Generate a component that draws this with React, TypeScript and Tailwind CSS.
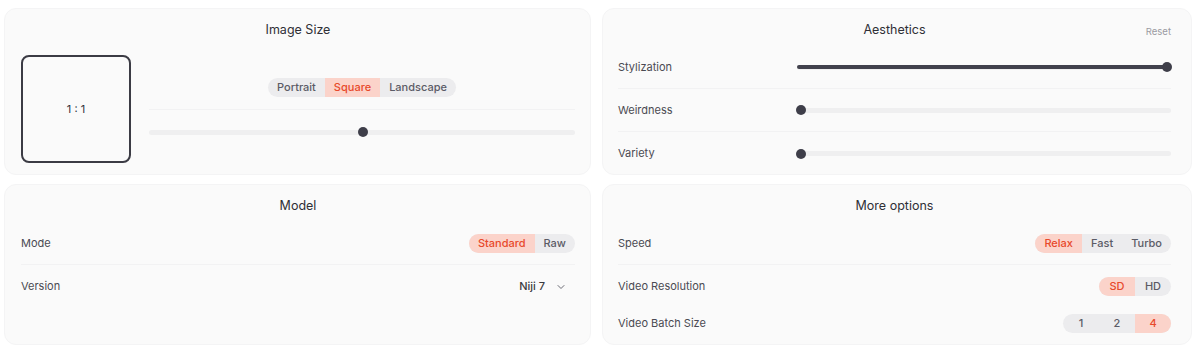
import * as React from 'react';
import { ChevronDown } from 'lucide-react';

type SegmentProps = {
  options: string[];
  active: string;
  fixed?: boolean;
};

function Segmented({ options, active, fixed }: SegmentProps) {
  return (
    <div className="flex h-[19px] overflow-hidden rounded-full bg-[#ececee]">
      {options.map((opt) => (
        <div
          key={opt}
          className={
            'flex items-center justify-center text-[11px] font-medium leading-none ' +
            (fixed ? 'w-9 ' : 'px-[9px] ') +
            (opt === active ? 'bg-[#fbd3ca] text-[#e8492b]' : 'text-[#5b5b66]')
          }
        >
          {opt}
        </div>
      ))}
    </div>
  );
}

function Slider({ value, thick }: { value: number; thick?: boolean }) {
  const pos = `calc(4px + (100% - 8px) * ${value / 100})`;
  return (
    <div className="relative flex h-[10px] flex-1 items-center">
      <div className="h-[5px] w-full rounded-full bg-[#efeff0]" />
      {thick ? <div className="absolute left-0 h-[4px] rounded-full bg-[#41414c]" style={{ width: pos }} /> : null}
      <div className="absolute size-[10px] -translate-x-1/2 rounded-full bg-[#3e3e49]" style={{ left: pos }} />
    </div>
  );
}

function Card({ title, children, className }: { title: string; children: React.ReactNode; className?: string }) {
  return (
    <div className={'flex flex-col rounded-xl border border-[#f4f4f5] bg-[#fafafa] pt-[13px] ' + (className ?? '')}>
      <div className="text-center text-[12.5px] leading-4 text-[#2f2f36]">{title}</div>
      {children}
    </div>
  );
}

function Row({
  label,
  children,
  divider,
  h = 'h-[43px]'
}: {
  label: string;
  children: React.ReactNode;
  divider?: boolean;
  h?: string;
}) {
  return (
    <div className={'flex items-center ' + h + (divider ? ' border-b border-[#f2f2f3]' : '')}>
      <span className="text-[11px] text-[#4a4a52]">{label}</span>
      <div className="flex flex-1 items-center justify-end">{children}</div>
    </div>
  );
}

export default function App() {
  return (
    <div
      className="grid h-[354px] w-[1200px] grid-cols-[587px_590px] grid-rows-[167px_161px] gap-x-[11px] gap-y-[9px] bg-white pl-1 pt-2"
      style={{ fontFamily: 'Inter, "Open Sans", sans-serif' }}
    >
      {/* Image size */}
      <Card title="Image Size" className="pl-4 pr-[15px]">
        <div className="mt-[17px] flex gap-[18px]">
          <div className="flex h-[108px] w-[110px] items-center justify-center rounded-lg border-2 border-[#3b3b44] text-[11px] text-[#33333a]">
            1 : 1
          </div>
          <div className="flex flex-1 flex-col pt-[23px]">
            <div className="flex justify-center">
              <Segmented options={['Portrait', 'Square', 'Landscape']} active="Square" />
            </div>
            <div className="mt-3 border-t border-[#f2f2f3]" />
            <div className="mt-[17px] flex">
              <Slider value={50.3} />
            </div>
          </div>
        </div>
      </Card>

      {/* Aesthetics */}
      <div className="relative flex flex-col rounded-xl border border-[#f4f4f5] bg-[#fafafa] pl-[15px] pr-5 pt-[13px]">
        <div className="text-center text-[12.5px] leading-4 text-[#2f2f36]">Aesthetics</div>
        <span className="absolute right-5 top-[16px] text-[9.5px] text-[#9a9aa2]">Reset</span>
        <div className="mt-2 flex flex-col">
          {[
            { label: 'Stylization', value: 100, thick: true },
            { label: 'Weirdness', value: 0 },
            { label: 'Variety', value: 0 }
          ].map((r, i) => (
            <div
              key={r.label}
              className={'flex h-[43px] items-center' + (i < 2 ? ' border-b border-[#f2f2f3]' : '')}
            >
              <span className="w-[179px] text-[11px] text-[#4a4a52]">{r.label}</span>
              <Slider value={r.value} thick={r.thick} />
            </div>
          ))}
        </div>
      </div>

      {/* Model */}
      <Card title="Model" className="pl-4 pr-[15px]">
        <div className="mt-2 flex flex-col">
          <Row label="Mode" divider>
            <Segmented options={['Standard', 'Raw']} active="Standard" />
          </Row>
          <Row label="Version">
            <span className="text-[11px] font-medium text-[#3a3a40]">Niji 7</span>
            <ChevronDown size={12} strokeWidth={2} className="ml-[10px] mr-[8px] text-[#6b6b74]" />
          </Row>
        </div>
      </Card>

      {/* More options */}
      <Card title="More options" className="pl-[15px] pr-5">
        <div className="mt-2 flex flex-col">
          <Row label="Speed" divider>
            <Segmented options={['Relax', 'Fast', 'Turbo']} active="Relax" />
          </Row>
          <Row label="Video Resolution">
            <Segmented options={['SD', 'HD']} active="SD" fixed />
          </Row>
          <Row label="Video Batch Size" h="h-[31px]">
            <Segmented options={['1', '2', '4']} active="4" fixed />
          </Row>
        </div>
      </Card>
    </div>
  );
}
